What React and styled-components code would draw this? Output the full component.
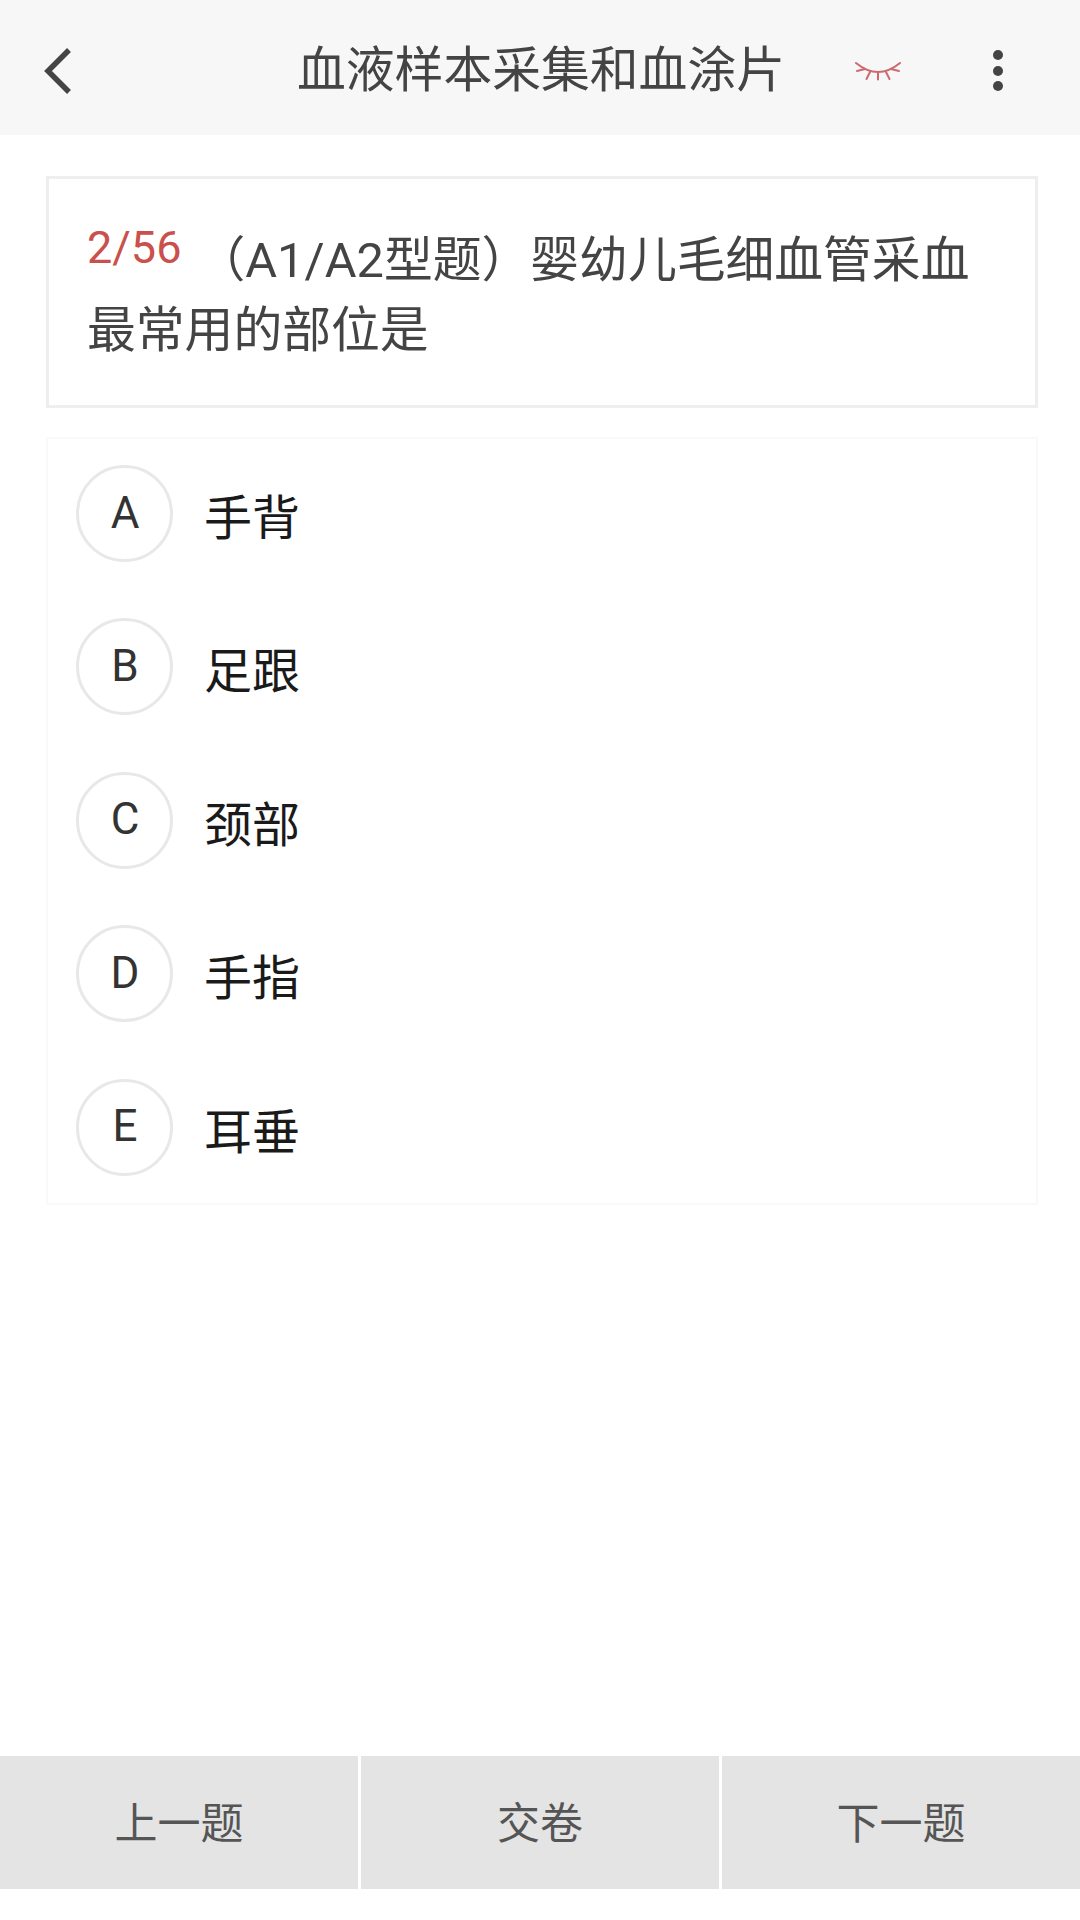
import React from "react";
import styled, { createGlobalStyle } from "styled-components";

const GlobalStyle = createGlobalStyle`
  html, body {
    margin: 0;
    padding: 0;
    background: #ffffff;
  }
  * {
    box-sizing: border-box;
  }
`;

const Page = styled.div`
  width: 1080px;
  height: 1920px;
  display: flex;
  flex-direction: column;
  font-family: "Roboto", "Noto Sans CJK SC", sans-serif;
  background: #ffffff;
  overflow: hidden;
`;

const Header = styled.div`
  height: 135px;
  flex-shrink: 0;
  display: flex;
  align-items: center;
  padding: 6px 0 0 43px;
  background: #f7f7f7;
`;

const BackIcon = styled.svg`
  width: 30px;
  height: 48px;
  flex-shrink: 0;
`;

const Title = styled.div`
  width: 490px;
  margin-left: 224px;
  padding-top: 1px;
  font-size: 48.8px;
  line-height: 60px;
  color: #444444;
  white-space: nowrap;
`;

const EyeIcon = styled.svg`
  width: 48px;
  height: 20px;
  margin-left: 66px;
  flex-shrink: 0;
`;

const MoreDots = styled.div`
  margin-left: 92px;
  display: flex;
  flex-direction: column;
  gap: 5.5px;
`;

const Dot = styled.span`
  width: 10px;
  height: 10px;
  border-radius: 50%;
  background: #444444;
`;

const Main = styled.div`
  flex: 1;
  padding: 41px 42px 0 46px;
  display: flex;
  flex-direction: column;
  gap: 29px;
`;

const QuestionCard = styled.div`
  height: 232px;
  border: 3px solid #eeeeee;
  padding: 47px 36px 0 38px;
  font-size: 48.8px;
  line-height: 69px;
  color: #444444;
`;

const QuestionLine = styled.div`
  display: flex;
  align-items: baseline;
  white-space: nowrap;
`;

const QuestionNo = styled.span`
  font-size: 45px;
  color: #c9504c;
  margin-right: 15px;
  position: relative;
  top: -14px;
`;

const OptionCard = styled.div`
  height: 768px;
  border: 2px solid #f9f9f9;
  padding: 26px 0 0 28px;
  display: flex;
  flex-direction: column;
`;

const OptionRow = styled.div`
  height: 153.4px;
  flex-shrink: 0;
  display: flex;
  align-items: flex-start;
  gap: 31px;
`;

const OptionLetter = styled.div`
  width: 97px;
  height: 97px;
  border-radius: 50%;
  border: 3px solid #e8e8e8;
  display: flex;
  align-items: center;
  justify-content: center;
  padding-bottom: 2px;
  padding-left: 1px;
  font-size: 44px;
  color: #333333;
`;

const OptionText = styled.div`
  font-size: 48px;
  line-height: 97px;
  color: #1a1a1a;
  padding-top: 5px;
`;

const BottomBar = styled.div`
  height: 133px;
  margin-bottom: 31px;
  flex-shrink: 0;
  display: flex;
  gap: 3px;
`;

const BarButton = styled.div`
  flex: 1;
  display: flex;
  align-items: center;
  justify-content: center;
  padding-bottom: 6px;
  background: #e4e4e4;
  font-size: 43px;
  color: #555555;
`;

const options = [
  { key: "A", text: "手背" },
  { key: "B", text: "足跟" },
  { key: "C", text: "颈部" },
  { key: "D", text: "手指" },
  { key: "E", text: "耳垂" },
];

const App = () => {
  return (
    <Page>
      <GlobalStyle />
      <Header>
        <BackIcon viewBox="0 0 30 48" fill="none" stroke="#444444" strokeWidth="5.5">
          <path d="M26 3 L5 24 L26 45" />
        </BackIcon>
        <Title>血液样本采集和血涂片</Title>
        <EyeIcon viewBox="0 0 48 20" fill="none" stroke="#cc6a70" strokeWidth="2" strokeLinecap="round">
          <path d="M3 2 Q25 20 47 2" />
          <path d="M4 10 L12 8" />
          <path d="M13.5 18 L17 11" />
          <path d="M25 18.5 L25 11" />
          <path d="M36.5 18 L33 11" />
          <path d="M46 10 L38 8" />
        </EyeIcon>
        <MoreDots>
          <Dot />
          <Dot />
          <Dot />
        </MoreDots>
      </Header>
      <Main>
        <QuestionCard>
          <QuestionLine>
            <QuestionNo>2/56</QuestionNo>
            <span>（A1/A2型题）婴幼儿毛细血管采血</span>
          </QuestionLine>
          <QuestionLine>最常用的部位是</QuestionLine>
        </QuestionCard>
        <OptionCard>
          {options.map((item) => (
            <OptionRow key={item.key}>
              <OptionLetter>{item.key}</OptionLetter>
              <OptionText>{item.text}</OptionText>
            </OptionRow>
          ))}
        </OptionCard>
      </Main>
      <BottomBar>
        <BarButton>上一题</BarButton>
        <BarButton>交卷</BarButton>
        <BarButton>下一题</BarButton>
      </BottomBar>
    </Page>
  );
};

export default App;
